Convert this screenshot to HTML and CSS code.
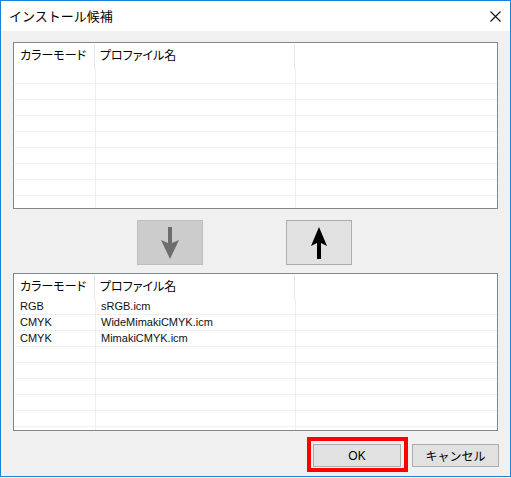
FILE: index.html
```html
<!DOCTYPE html>
<html lang="ja">
<head>
  <meta charset="UTF-8" />
  <title>インストール候補</title>
  <link rel="stylesheet" href="styles.css">
</head>
<body>
  <div class="window">
    <div class="titlebar">
      <span class="title">インストール候補</span>
      <svg class="close" width="11" height="11" viewBox="0 0 11 11">
        <path d="M0.5 0.5 L10.5 10.5 M10.5 0.5 L0.5 10.5" stroke="#111" stroke-width="1.1" fill="none"/>
      </svg>
    </div>

    <div class="client">
      <!-- candidates -->
      <div class="list list-top">
        <div class="list-head">
          <div class="hcell">カラーモード</div>
          <div class="hcell">プロファイル名</div>
          <div class="hcell last"></div>
        </div>
        <div class="row"><div class="cell"></div><div class="cell"></div><div class="cell last"></div></div>
        <div class="row"><div class="cell"></div><div class="cell"></div><div class="cell last"></div></div>
        <div class="row"><div class="cell"></div><div class="cell"></div><div class="cell last"></div></div>
        <div class="row"><div class="cell"></div><div class="cell"></div><div class="cell last"></div></div>
        <div class="row"><div class="cell"></div><div class="cell"></div><div class="cell last"></div></div>
        <div class="row"><div class="cell"></div><div class="cell"></div><div class="cell last"></div></div>
        <div class="row"><div class="cell"></div><div class="cell"></div><div class="cell last"></div></div>
        <div class="row"><div class="cell"></div><div class="cell"></div><div class="cell last"></div></div>
        <div class="row"><div class="cell"></div><div class="cell"></div><div class="cell last"></div></div>
      </div>

      <div class="move-buttons">
        <button class="move disabled" disabled>
          <svg width="22" height="32" viewBox="0 0 22 32">
            <polygon points="11,32 20,13 13,16 13,0 9,0 9,16 2,13" fill="#6d6d6d"/>
          </svg>
        </button>
        <button class="move">
          <svg width="22" height="32" viewBox="0 0 22 32">
            <polygon points="11,0 19,19 13,16 13,32 9,32 9,16 3,19" fill="#000"/>
          </svg>
        </button>
      </div>

      <!-- installed -->
      <div class="list list-bottom">
        <div class="list-head">
          <div class="hcell">カラーモード</div>
          <div class="hcell">プロファイル名</div>
          <div class="hcell last"></div>
        </div>
        <div class="row"><div class="cell">RGB</div><div class="cell">sRGB.icm</div><div class="cell last"></div></div>
        <div class="row"><div class="cell">CMYK</div><div class="cell">WideMimakiCMYK.icm</div><div class="cell last"></div></div>
        <div class="row"><div class="cell">CMYK</div><div class="cell">MimakiCMYK.icm</div><div class="cell last"></div></div>
        <div class="row"><div class="cell"></div><div class="cell"></div><div class="cell last"></div></div>
        <div class="row"><div class="cell"></div><div class="cell"></div><div class="cell last"></div></div>
        <div class="row"><div class="cell"></div><div class="cell"></div><div class="cell last"></div></div>
        <div class="row"><div class="cell"></div><div class="cell"></div><div class="cell last"></div></div>
        <div class="row"><div class="cell"></div><div class="cell"></div><div class="cell last"></div></div>
        <div class="row"><div class="cell"></div><div class="cell"></div><div class="cell last"></div></div>
      </div>

      <div class="footer">
        <div class="ok-wrap">
          <button class="btn">OK</button>
          <div class="highlight"></div>
        </div>
        <button class="btn">キャンセル</button>
      </div>
    </div>
  </div>
</body>
</html>
```

FILE: styles.css
```css
* {
  box-sizing: border-box;
}
body {
  margin: 0;
  background: #fff;
  font-family: 'Liberation Sans', 'Noto Sans CJK JP', sans-serif;
  font-size: 12px;
  color: #000;
}
.window {
  width: 511px;
  height: 477px;
  border: 1px solid #1883d7;
  display: flex;
  flex-direction: column;
  background: #f0f0f0;
}
.titlebar {
  height: 30px;
  background: #fff;
  display: flex;
  align-items: center;
  justify-content: space-between;
  padding: 0 9px 0 8px;
}
.title {
  font-family: 'Noto Sans CJK JP', sans-serif;
  font-size: 13px;
  color: #000;
  margin-top: -1px;
}
.close {
  display: block;
  margin-top: 1px;
}
.client {
  flex: 1;
  padding: 11px 0 0 12px;
  display: flex;
  flex-direction: column;
}
.list {
  width: 485px;
  background: #fff;
  border: 1px solid #828790;
  overflow: hidden;
}
.list-top {
  height: 167px;
}
.list-bottom {
  height: 158px;
}
.list-head {
  display: flex;
  height: 25px;
}
.hcell {
  width: 81px;
  height: 24px;
  margin-top: 1px;
  border-right: 1px solid #e5e5e5;
  padding-left: 6px;
  line-height: 22px;
  font-family: 'Noto Sans CJK JP', sans-serif;
  font-feature-settings: "palt";
  font-size: 12px;
  white-space: nowrap;
}
.hcell + .hcell {
  width: 200px;
  padding-left: 5px;
}
.hcell.last {
  flex: 1;
  border-right: none;
}
.row {
  display: flex;
  height: 16px;
  margin-left: 1px;
  border-bottom: 1px solid #efefef;
}
.cell {
  width: 81px;
  border-right: 1px solid #efefef;
  padding-left: 5px;
  font-size: 11px;
  line-height: 15px;
  color: #111;
  white-space: nowrap;
}
.cell + .cell {
  width: 200px;
}
.cell.last {
  flex: 1;
  border-right: none;
}
.move-buttons {
  display: flex;
  gap: 83px;
  padding-left: 124px;
  margin: 11px 0 8px;
}
.move {
  width: 66px;
  height: 45px;
  background: #e1e1e1;
  border: 1px solid #adadad;
  padding: 0;
  display: flex;
  align-items: center;
  justify-content: center;
}
.move svg {
  display: block;
}
.move.disabled {
  background: #cccccc;
  border-color: #bfbfbf;
}
.footer {
  display: flex;
  justify-content: flex-end;
  gap: 11px;
  padding-right: 11px;
  margin-top: 13px;
}
.ok-wrap {
  position: relative;
}
.btn {
  display: block;
  width: 88px;
  height: 23px;
  background: #e1e1e1;
  border: 1px solid #adadad;
  padding: 0;
  font-family: 'Liberation Sans', 'Noto Sans CJK JP', sans-serif;
  font-size: 12px;
  color: #000;
}
.footer > .btn {
  width: 87px;
}
.highlight {
  position: absolute;
  left: -6px;
  top: -7px;
  width: 101px;
  height: 35px;
  border: 4px solid #ff0000;
}
```
